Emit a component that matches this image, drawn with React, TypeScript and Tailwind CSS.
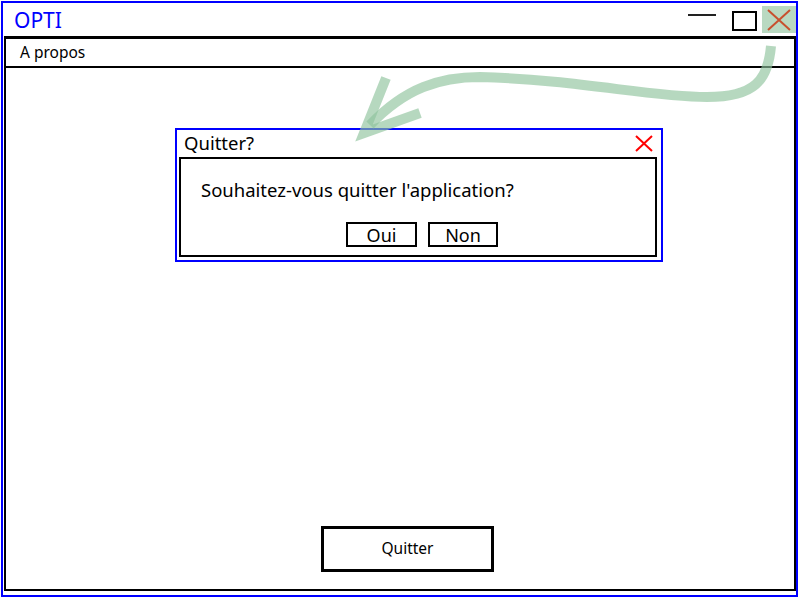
export default function App() {
  return (
    <div className="relative h-[600px] w-[800px] overflow-hidden bg-white p-px font-['Noto_Sans',sans-serif] text-black">
      {/* Fenêtre principale */}
      <div className="flex h-[596px] w-[797px] flex-col border-2 border-[#0000ff]">
        {/* Barre de titre */}
        <div className="flex h-[33px] shrink-0 items-start">
          <span className="ml-[11px] mt-[5px] text-[21px] leading-[24px] text-[#0000ff]">OPTI</span>
          <div className="ml-auto mt-[11px] h-[2px] w-[28px] bg-[#222]" />
          <div className="ml-[16px] mt-[8px] h-[20px] w-[25px] border-2 border-black" />
          <div className="ml-[5px] mt-[3px] flex h-[27px] w-[34px] items-center justify-center bg-[#b9d9c1]">
            <svg width="24" height="22" viewBox="0 0 24 22">
              <path d="M1 1 L23 21 M23 1 L1 21" stroke="#c8502e" strokeWidth="2" fill="none" />
            </svg>
          </div>
        </div>

        {/* Cadre intérieur */}
        <div className="ml-px mb-[4px] flex flex-1 flex-col border-2 border-t-[3px] border-black">
          <div className="flex h-[29px] shrink-0 items-center border-b-2 border-black pl-[14px] text-[15.5px] leading-none">
            A propos
          </div>

          <div className="flex flex-1 flex-col">
            {/* Boîte de dialogue */}
            <div className="ml-[169px] mt-[60px] h-[134px] w-[488px] border-2 border-[#0000ff] px-[2px]">
              <div className="flex h-[27px] items-center justify-between pl-[5px] pr-[6px]">
                <span className="text-[18.5px] leading-none">Quitter?</span>
                <svg width="18" height="17" viewBox="0 0 18 17">
                  <path d="M1 1 L17 16 M17 1 L1 16" stroke="#ff0000" strokeWidth="2" fill="none" />
                </svg>
              </div>
              <div className="flex h-[100px] w-[478px] flex-col border-2 border-black">
                <div className="ml-[20px] mt-[19px] text-[18.5px] leading-[24px]">
                  Souhaitez-vous quitter l'application?
                </div>
                <div className="mt-[20px] flex justify-center gap-[11px] pl-[8px]">
                  <button className="flex h-[25px] w-[71px] items-center justify-center border-2 border-black text-[18px] leading-none">
                    Oui
                  </button>
                  <button className="flex h-[25px] w-[70px] items-center justify-center border-2 border-black text-[18px] leading-none">
                    Non
                  </button>
                </div>
              </div>
            </div>

            <button className="mb-[17px] ml-[315px] mt-auto flex h-[46px] w-[173px] items-center justify-center border-[3px] border-black text-[15.5px] leading-none">
              Quitter
            </button>
          </div>
        </div>
      </div>

      {/* Flèche d'annotation */}
      <svg className="pointer-events-none absolute left-0 top-0" width="800" height="600" viewBox="0 0 800 600">
        <g stroke="#8fc39c" strokeOpacity="0.65" strokeWidth="10" fill="none" strokeLinecap="butt">
          <path d="M771 46 C 768 80, 755 97, 707 97 C 650 97, 580 80, 480 77 C 440 77, 405 88, 370 125" />
          <path d="M386 78 L 364 133 L 420 113" />
        </g>
      </svg>
    </div>
  );
}
